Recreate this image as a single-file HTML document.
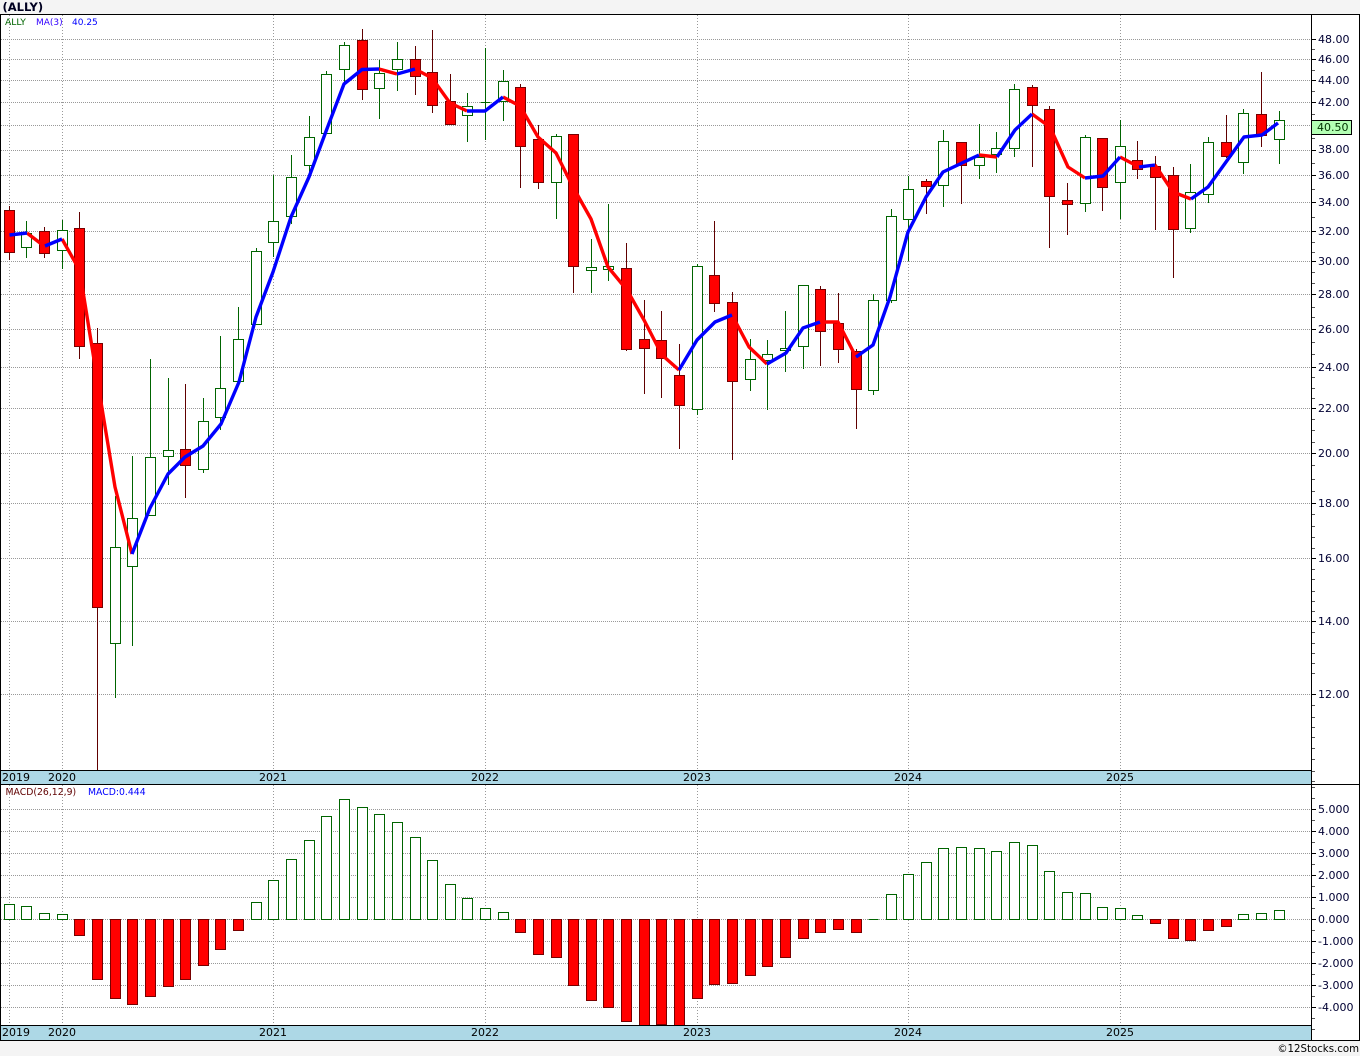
<!DOCTYPE html>
<html><head><meta charset="utf-8"><title>(ALLY)</title>
<style>
html,body{margin:0;padding:0;background:#f4f4f4;width:1360px;height:1056px;overflow:hidden}
svg{display:block;position:absolute;left:0;top:0}
text{font-family:"DejaVu Sans","Liberation Sans",sans-serif;font-size:11px;fill:#000}
.c{shape-rendering:crispEdges}
.ml{fill:none;stroke-width:3.4;stroke-linejoin:round;stroke-linecap:butt}
.r{stroke:#f00}.b{stroke:#00f}
.ax text{fill:#000033}
</style></head><body>
<svg width="1360" height="1056" viewBox="0 0 1360 1056" xmlns="http://www.w3.org/2000/svg">
<rect x="0" y="14" width="1360" height="1027" fill="#fff"/>
<text x="2.5" y="11" style="font-weight:bold;font-size:11.5px;fill:#000020">(ALLY)</text>

<!-- grid -->
<path class="c" fill="none" stroke="#999" stroke-dasharray="1 1" d="M1 39.5H1311M1 59.5H1311M1 80.5H1311M1 102.5H1311M1 125.5H1311M1 150.5H1311M1 175.5H1311M1 202.5H1311M1 231.5H1311M1 261.5H1311M1 294.5H1311M1 329.5H1311M1 367.5H1311M1 408.5H1311M1 453.5H1311M1 503.5H1311M1 558.5H1311M1 621.5H1311M1 694.5H1311M1 809.5H1311M1 831.5H1311M1 853.5H1311M1 875.5H1311M1 897.5H1311M1 919.5H1311M1 941.5H1311M1 963.5H1311M1 985.5H1311M1 1007.5H1311"/>
<path class="c" fill="none" stroke="#999" stroke-dasharray="1 2" d="M9.5 15V770M62.5 15V770M273.5 15V770M485.5 15V770M697.5 15V770M908.5 15V770M1120.5 15V770M9.5 785V1025M62.5 785V1025M273.5 785V1025M485.5 785V1025M697.5 785V1025M908.5 785V1025M1120.5 785V1025"/>

<!-- wicks -->
<path class="c" fill="none" stroke="#006400" d="M26.5 221V258M62.5 220V269M115.5 496V698M132.5 456V646M150.5 359V516M168.5 378V485M203.5 398V473M220.5 336V430M238.5 307V381M256.5 248V324M273.5 175V257M291.5 155V224M309.5 116V177M326.5 71V133M344.5 42V82M379.5 60V119M397.5 42V91M467.5 93V142M485.5 48V140M503.5 70V121M556.5 134V219M591.5 239V293M608.5 204V281M697.5 264V415M750.5 339V391M767.5 340V410M785.5 311V372M803.5 285V369M873.5 294V395M891.5 209V303M908.5 176V261M943.5 130V207M979.5 124V179M996.5 132V173M1014.5 84V157M1085.5 135V212M1120.5 120V219M1190.5 164V233M1208.5 137V203M1243.5 109V174M1279.5 111V164"/>
<path class="c" fill="none" stroke="#600000" d="M9.5 206V260M44.5 227V258M79.5 212V359M97.5 328V770M185.5 384V498M362.5 29V100M415.5 46V95M432.5 30V113M450.5 74V125M520.5 84V188M538.5 125V189M573.5 134V293M626.5 243V351M644.5 300V394M661.5 311V398M679.5 344V449M714.5 221V312M732.5 292V460M820.5 286V366M838.5 293V363M856.5 349V429M926.5 179V214M961.5 142V204M1032.5 85V167M1049.5 106V248M1067.5 183V235M1102.5 138V211M1137.5 141V179M1155.5 156V230M1173.5 167V278M1226.5 115V158M1261.5 72V147"/>

<!-- candle bodies -->
<path class="c" fill="#fff" stroke="#006400" d="M21.5 233.5h10v14h-10zM57.5 230.5h10v20h-10zM110.5 547.5h10v96h-10zM127.5 518.5h10v48h-10zM145.5 457.5h10v58h-10zM163.5 450.5h10v6h-10zM198.5 421.5h10v48h-10zM215.5 388.5h10v29h-10zM233.5 339.5h10v42h-10zM251.5 251.5h10v73h-10zM268.5 221.5h10v21h-10zM286.5 177.5h10v39h-10zM304.5 137.5h10v28h-10zM321.5 74.5h10v59h-10zM339.5 45.5h10v24h-10zM374.5 73.5h10v15h-10zM392.5 59.5h10v10h-10zM462.5 106.5h10v9h-10zM480.5 102.5h10M498.5 81.5h10v20h-10zM551.5 136.5h10v46h-10zM586.5 267.5h10v3h-10zM603.5 266.5h10v3h-10zM692.5 266.5h10v143h-10zM745.5 359.5h10v20h-10zM762.5 354.5h10v6h-10zM780.5 348.5h10v2h-10zM798.5 285.5h10v61h-10zM868.5 300.5h10v90h-10zM886.5 216.5h10v84h-10zM903.5 189.5h10v30h-10zM938.5 141.5h10v44h-10zM974.5 157.5h10v8h-10zM991.5 148.5h10v6h-10zM1009.5 89.5h10v59h-10zM1080.5 137.5h10v66h-10zM1115.5 146.5h10v36h-10zM1185.5 192.5h10v36h-10zM1203.5 142.5h10v52h-10zM1238.5 113.5h10v49h-10zM1274.5 120.5h10v19h-10z"/>
<path class="c" fill="#f00" stroke="#770000" d="M4.5 210.5h10v42h-10zM39.5 231.5h10v22h-10zM74.5 228.5h10v118h-10zM92.5 343.5h10v264h-10zM180.5 449.5h10v16h-10zM357.5 40.5h10v49h-10zM410.5 59.5h10v17h-10zM427.5 72.5h10v33h-10zM445.5 101.5h10v23h-10zM515.5 87.5h10v59h-10zM533.5 139.5h10v43h-10zM568.5 134.5h10v132h-10zM621.5 268.5h10v81h-10zM639.5 339.5h10v9h-10zM656.5 340.5h10v18h-10zM674.5 375.5h10v30h-10zM709.5 275.5h10v28h-10zM727.5 302.5h10v79h-10zM815.5 289.5h10v42h-10zM833.5 323.5h10v26h-10zM851.5 351.5h10v38h-10zM921.5 181.5h10v5h-10zM956.5 142.5h10v23h-10zM1027.5 87.5h10v18h-10zM1044.5 109.5h10v87h-10zM1062.5 200.5h10v4h-10zM1097.5 138.5h10v49h-10zM1132.5 160.5h10v9h-10zM1150.5 166.5h10v11h-10zM1168.5 175.5h10v54h-10zM1221.5 142.5h10v14h-10zM1256.5 114.5h10v21h-10z"/>

<!-- MA(3) -->
<polyline class="ml r" points="27,233 44,246"/>
<polyline class="ml r" points="62,239 79.5,270 97,378 115,487 132,554"/>
<polyline class="ml r" points="379,69 397,74"/>
<polyline class="ml r" points="415,69 432,78 450,103 467,111"/>
<polyline class="ml r" points="503,97 520,106 538,137 556,153 573,187 591,219 608,267 627,290 644,320 662,355 679,370"/>
<polyline class="ml r" points="732,315 749,347 767,364"/>
<polyline class="ml r" points="820,322 838,322 856,357"/>
<polyline class="ml r" points="979,155 997,157"/>
<polyline class="ml r" points="1032,114 1050,127 1068,167 1085,178"/>
<polyline class="ml r" points="1120,157 1139,167"/>
<polyline class="ml r" points="1155,165 1173,192 1191,199"/>
<polyline class="ml b" points="9.5,235 27,233"/>
<polyline class="ml b" points="45,246 62,239"/>
<polyline class="ml b" points="132,554 150,508 168,474 185,457 203,446 221,424 239,382 256,317 273,272 291,217 309,177 326.5,130 344,84 362,69.5 379,69"/>
<polyline class="ml b" points="397,74 415,69"/>
<polyline class="ml b" points="467,111 485,111 503,97"/>
<polyline class="ml b" points="679,370 697,340 715,322 732,315"/>
<polyline class="ml b" points="767,364 786,353 803,328 820,322"/>
<polyline class="ml b" points="856,357 873,345 890,297 908,232 926,197 943,172 962,163 979,155"/>
<polyline class="ml b" points="997,157 1015,130 1032,114"/>
<polyline class="ml b" points="1085,178 1103,176 1120,157"/>
<polyline class="ml b" points="1139,167 1155,165"/>
<polyline class="ml b" points="1191,199 1208,187 1226,162 1244,137 1262,135 1278,123"/>

<!-- MACD bars -->
<path class="c" fill="#fff" stroke="#006400" d="M4.5 904.5h10V919.5h-10zM21.5 906.5h10V919.5h-10zM39.5 913.5h10V919.5h-10zM57.5 914.5h10V919.5h-10zM251.5 902.5h10V919.5h-10zM268.5 880.5h10V919.5h-10zM286.5 859.5h10V919.5h-10zM304.5 840.5h10V919.5h-10zM321.5 816.5h10V919.5h-10zM339.5 799.5h10V919.5h-10zM357.5 807.5h10V919.5h-10zM374.5 814.5h10V919.5h-10zM392.5 822.5h10V919.5h-10zM410.5 837.5h10V919.5h-10zM427.5 860.5h10V919.5h-10zM445.5 884.5h10V919.5h-10zM462.5 898.5h10V919.5h-10zM480.5 908.5h10V919.5h-10zM498.5 912.5h10V919.5h-10zM868.5 919.5h10M886.5 894.5h10V919.5h-10zM903.5 874.5h10V919.5h-10zM921.5 862.5h10V919.5h-10zM938.5 848.5h10V919.5h-10zM956.5 847.5h10V919.5h-10zM974.5 848.5h10V919.5h-10zM991.5 851.5h10V919.5h-10zM1009.5 842.5h10V919.5h-10zM1027.5 845.5h10V919.5h-10zM1044.5 871.5h10V919.5h-10zM1062.5 892.5h10V919.5h-10zM1080.5 893.5h10V919.5h-10zM1097.5 907.5h10V919.5h-10zM1115.5 908.5h10V919.5h-10zM1132.5 915.5h10V919.5h-10zM1238.5 914.5h10V919.5h-10zM1256.5 913.5h10V919.5h-10zM1274.5 910.5h10V919.5h-10z"/>
<path class="c" fill="#f00" stroke="#770000" d="M74.5 919.5h10V935.5h-10zM92.5 919.5h10V979.5h-10zM110.5 919.5h10V998.5h-10zM127.5 919.5h10V1004.5h-10zM145.5 919.5h10V996.5h-10zM163.5 919.5h10V986.5h-10zM180.5 919.5h10V979.5h-10zM198.5 919.5h10V965.5h-10zM215.5 919.5h10V949.5h-10zM233.5 919.5h10V930.5h-10zM515.5 919.5h10V932.5h-10zM533.5 919.5h10V954.5h-10zM551.5 919.5h10V957.5h-10zM568.5 919.5h10V985.5h-10zM586.5 919.5h10V1000.5h-10zM603.5 919.5h10V1007.5h-10zM621.5 919.5h10V1021.5h-10zM639.5 919.5h10V1030h-10zM656.5 919.5h10V1024.5h-10zM674.5 919.5h10V1030h-10zM692.5 919.5h10V998.5h-10zM709.5 919.5h10V984.5h-10zM727.5 919.5h10V983.5h-10zM745.5 919.5h10V975.5h-10zM762.5 919.5h10V966.5h-10zM780.5 919.5h10V957.5h-10zM798.5 919.5h10V938.5h-10zM815.5 919.5h10V932.5h-10zM833.5 919.5h10V929.5h-10zM851.5 919.5h10V932.5h-10zM1150.5 919.5h10V923.5h-10zM1168.5 919.5h10V938.5h-10zM1185.5 919.5h10V940.5h-10zM1203.5 919.5h10V930.5h-10zM1221.5 919.5h10V926.5h-10z"/>

<!-- year bands -->
<rect x="1" y="771" width="1310" height="13" fill="#add8e6"/>
<rect x="1" y="1026" width="1310" height="14" fill="#add8e6"/>
<rect x="1" y="1041" width="1359" height="15" fill="#f4f4f4"/>

<!-- frame -->
<path class="c" fill="none" stroke="#000" d="M0 14.5H1360M0.5 14V1041M1311.5 14V1041M1359.5 14V1041M0 770.5H1311M0 784.5H1360M0 1025.5H1311M0 1040.5H1360"/>

<!-- axis ticks -->
<path class="c" fill="none" stroke="#000" d="M1312 39.5h4M1312 59.5h4M1312 80.5h4M1312 102.5h4M1312 125.5h4M1312 150.5h4M1312 175.5h4M1312 202.5h4M1312 231.5h4M1312 261.5h4M1312 294.5h4M1312 329.5h4M1312 367.5h4M1312 408.5h4M1312 453.5h4M1312 503.5h4M1312 558.5h4M1312 621.5h4M1312 694.5h4M1312 809.5h4M1312 831.5h4M1312 853.5h4M1312 875.5h4M1312 897.5h4M1312 919.5h4M1312 941.5h4M1312 963.5h4M1312 985.5h4M1312 1007.5h4"/>
<path class="c" fill="none" stroke="#555" d="M1312 49.5h3M1312 70.5h3M1312 91.5h3M1312 114.5h3M1312 138.5h3M1312 163.5h3M1312 189.5h3M1312 217.5h3M1312 242.5h3M1312 252.5h3M1312 272.5h3M1312 283.5h3M1312 307.5h3M1312 317.5h3M1312 342.5h3M1312 354.5h3M1312 377.5h3M1312 388.5h3M1312 398.5h3M1312 419.5h3M1312 430.5h3M1312 442.5h3M1312 465.5h3M1312 479.5h3M1312 491.5h3M1312 514.5h3M1312 526.5h3M1312 537.5h3M1312 548.5h3M1312 569.5h3M1312 579.5h3M1312 591.5h3M1312 601.5h3M1312 611.5h3M1312 632.5h3M1312 643.5h3M1312 653.5h3M1312 663.5h3M1312 673.5h3M1312 705.5h3M1312 717.5h3M1312 727.5h3M1312 737.5h3M1312 748.5h3M1312 759.5h3M1312 771.5h3M1312 781.5h3M1312 787.5h3M1312 798.5h3M1312 820.5h3M1312 842.5h3M1312 864.5h3M1312 886.5h3M1312 908.5h3M1312 930.5h3M1312 952.5h3M1312 974.5h3M1312 996.5h3M1312 1018.5h3M1312 1029.5h3"/>

<!-- axis labels -->
<g class="ax">
<text x="1318" y="43">48.00</text>
<text x="1318" y="63">46.00</text>
<text x="1318" y="84">44.00</text>
<text x="1318" y="106">42.00</text>
<text x="1318" y="153">38.00</text>
<text x="1318" y="179">36.00</text>
<text x="1318" y="206">34.00</text>
<text x="1318" y="235">32.00</text>
<text x="1318" y="265">30.00</text>
<text x="1318" y="298">28.00</text>
<text x="1318" y="333">26.00</text>
<text x="1318" y="371">24.00</text>
<text x="1318" y="412">22.00</text>
<text x="1318" y="457">20.00</text>
<text x="1318" y="507">18.00</text>
<text x="1318" y="562">16.00</text>
<text x="1318" y="625">14.00</text>
<text x="1318" y="698">12.00</text>
<text x="1318" y="813">5.000</text>
<text x="1318" y="835">4.000</text>
<text x="1318" y="857">3.000</text>
<text x="1318" y="879">2.000</text>
<text x="1318" y="901">1.000</text>
<text x="1318" y="923">0.000</text>
<text x="1318" y="945">-1.000</text>
<text x="1318" y="967">-2.000</text>
<text x="1318" y="989">-3.000</text>
<text x="1318" y="1011">-4.000</text>
</g>
<rect class="c" x="1311.5" y="120.5" width="40" height="14" fill="#b3ffb3" stroke="#000"/>
<text x="1317" y="131" style="fill:#003300">40.50</text>

<!-- year labels -->
<text x="2" y="781">2019</text><text x="48" y="781">2020</text><text x="259" y="781">2021</text><text x="471" y="781">2022</text><text x="683" y="781">2023</text><text x="894" y="781">2024</text><text x="1106" y="781">2025</text>
<text x="2" y="1036">2019</text><text x="48" y="1036">2020</text><text x="259" y="1036">2021</text><text x="471" y="1036">2022</text><text x="683" y="1036">2023</text><text x="894" y="1036">2024</text><text x="1106" y="1036">2025</text>

<!-- legends -->
<text x="5" y="25" style="font-size:9.2px;fill:#006400">ALLY</text>
<text x="36" y="25" style="font-size:9px;fill:#3300ff">MA(3)</text>
<text x="72" y="25" style="font-size:9px;fill:#0000ff">40.25</text>
<text x="5.5" y="795" style="font-size:9.3px;fill:#600000">MACD(26,12,9)</text>
<text x="88" y="795" style="font-size:9.3px;fill:#0000ff">MACD:0.444</text>

<text x="1359" y="1052" text-anchor="end" style="font-size:10.2px;fill:#000">©12Stocks.com</text>
</svg>
</body></html>
